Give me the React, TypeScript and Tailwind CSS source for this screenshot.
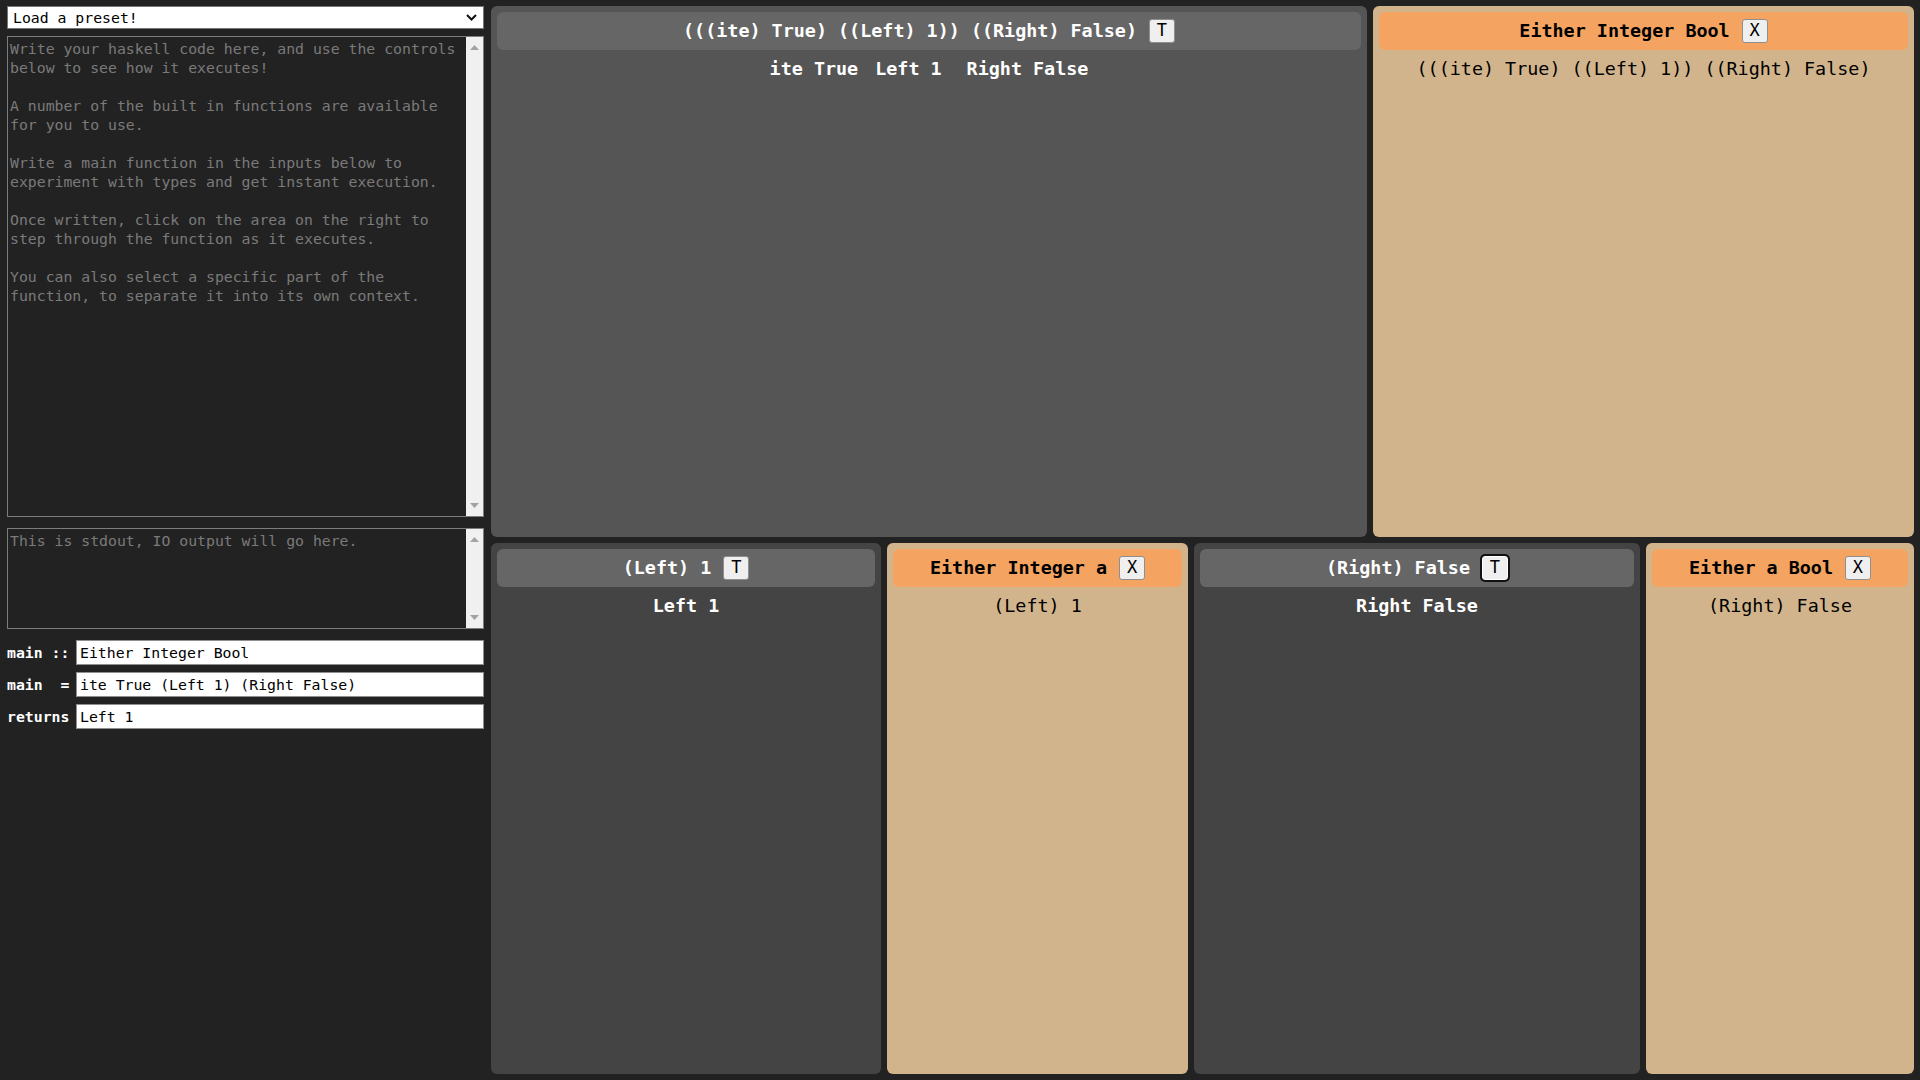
import type { ReactNode } from 'react'

const mono = "font-['DejaVu_Sans_Mono','Liberation_Mono',monospace]"

const intro = [
  'Write your haskell code here, and use the controls',
  'below to see how it executes!',
  '',
  'A number of the built in functions are available',
  'for you to use.',
  '',
  'Write a main function in the inputs below to',
  'experiment with types and get instant execution.',
  '',
  'Once written, click on the area on the right to',
  'step through the function as it executes.',
  '',
  'You can also select a specific part of the',
  'function, to separate it into its own context.',
].join('\n')

// fake classic scrollbar, the headless one looks different
function Scrollbar() {
  return (
    <div className="flex w-[17px] shrink-0 flex-col items-center justify-between bg-[#f0f0f0] py-[8px]">
      <svg width="9" height="5" viewBox="0 0 9 5">
        <path d="M0 5 L4.5 0 L9 5 Z" fill="#a3a3a3" />
      </svg>
      <svg width="9" height="5" viewBox="0 0 9 5">
        <path d="M0 0 L4.5 5 L9 0 Z" fill="#a3a3a3" />
      </svg>
    </div>
  )
}

function Field({ label, value }: { label: string; value: string }) {
  return (
    <div className="flex h-[25px] items-center">
      <span className="w-[69px] shrink-0 whitespace-pre font-bold text-white">{label}</span>
      <input
        readOnly
        defaultValue={value}
        className="h-full min-w-0 flex-1 border border-[#8f8f8f] bg-white px-[3px] text-black outline-none"
      />
    </div>
  )
}

function HeaderButton({ label, focused }: { label: string; focused?: boolean }) {
  return (
    <button
      type="button"
      className={
        focused
          ? 'flex h-[24px] w-[26px] items-center justify-center rounded-[3px] border border-white bg-[#efefef] text-[17px] font-normal text-black outline-2 outline-[#111]'
          : 'flex h-[24px] w-[26px] items-center justify-center rounded-[3px] border border-[#8f8f8f] bg-[#efefef] text-[17px] font-normal text-black'
      }
    >
      {label}
    </button>
  )
}

type PanelProps = {
  kind: 'expr' | 'type'
  tone?: 'top' | 'bottom'
  size: string
  title: string
  button: string
  focused?: boolean
  children: ReactNode
}

function Panel({ kind, tone = 'bottom', size, title, button, focused, children }: PanelProps) {
  const isExpr = kind === 'expr'
  const panelBg = isExpr ? (tone === 'top' ? 'bg-[#555]' : 'bg-[#444]') : 'bg-[#d2b48c]'
  return (
    <section className={`${size} flex flex-col rounded-[6px] px-[6px] pt-[6px] ${panelBg}`}>
      <header
        className={
          isExpr
            ? 'flex h-[38px] items-center justify-center gap-[12px] rounded-[6px] bg-[#666] font-bold text-white'
            : 'flex h-[38px] items-center justify-center gap-[12px] rounded-[6px] bg-[#f4a460] font-bold text-black'
        }
      >
        <span className="whitespace-pre">{title}</span>
        <HeaderButton label={button} focused={focused} />
      </header>
      <div
        className={
          isExpr
            ? 'mt-[8px] whitespace-pre text-center font-bold leading-[22px] text-white'
            : 'mt-[8px] whitespace-pre text-center leading-[22px] text-black'
        }
      >
        {children}
      </div>
    </section>
  )
}

export default function App() {
  return (
    <main className={`flex h-screen w-full overflow-hidden bg-[#222] ${mono}`}>
      {/* editor column */}
      <aside className="flex w-[490px] shrink-0 flex-col pl-[7px] pr-[6px] pt-[6px] text-[14.8px] leading-[19px]">
        <div className="relative h-[23px]">
          <select className="h-full w-full appearance-none border border-[#767676] bg-white pl-[5px] text-black outline-none">
            <option>Load a preset!</option>
          </select>
          <svg
            className="pointer-events-none absolute right-[7px] top-[8px]"
            width="11"
            height="7"
            viewBox="0 0 11 7"
          >
            <path d="M1 1 L5.5 5.5 L10 1" fill="none" stroke="#111" strokeWidth="2" />
          </svg>
        </div>

        <div className="mt-[7px] flex h-[481px] border border-[#7d7d7d]">
          <textarea
            className="h-full min-w-0 flex-1 resize-none overflow-hidden bg-[#222] p-[2px] leading-[19px] text-white outline-none placeholder:text-[#7a7a7a]"
            placeholder={intro}
          />
          <Scrollbar />
        </div>

        <div className="mt-[11px] flex h-[101px] border border-[#7d7d7d]">
          <textarea
            className="h-full min-w-0 flex-1 resize-none overflow-hidden bg-[#222] p-[2px] leading-[19px] text-white outline-none placeholder:text-[#7a7a7a]"
            placeholder="This is stdout, IO output will go here."
          />
          <Scrollbar />
        </div>

        <div className="mt-[11px] flex flex-col gap-[7px]">
          <Field label="main ::" value="Either Integer Bool" />
          <Field label="main  =" value="ite True (Left 1) (Right False)" />
          <Field label="returns" value="Left 1" />
        </div>
      </aside>

      {/* evaluation tree */}
      <div className="flex min-w-0 flex-1 flex-col gap-[6px] py-[6px] pl-[1px] pr-[6px] text-[18.4px]">
        <div className="flex flex-1 gap-[6px]">
          <Panel
            kind="expr"
            tone="top"
            size="w-[876px] shrink-0"
            title="(((ite) True) ((Left) 1)) ((Right) False)"
            button="T"
          >
            <span>ite True</span>
            <span className="ml-[17px]">Left 1</span>
            <span className="ml-[25px]">Right False</span>
          </Panel>
          <Panel kind="type" size="min-w-0 flex-1" title="Either Integer Bool" button="X">
            (((ite) True) ((Left) 1)) ((Right) False)
          </Panel>
        </div>

        <div className="flex flex-1 gap-[6px]">
          <Panel kind="expr" size="w-[390px] shrink-0" title="(Left) 1" button="T">
            Left 1
          </Panel>
          <Panel kind="type" size="w-[301px] shrink-0" title="Either Integer a" button="X">
            (Left) 1
          </Panel>
          <Panel kind="expr" size="w-[446px] shrink-0" title="(Right) False" button="T" focused>
            Right False
          </Panel>
          <Panel kind="type" size="min-w-0 flex-1" title="Either a Bool" button="X">
            (Right) False
          </Panel>
        </div>
      </div>
    </main>
  )
}
